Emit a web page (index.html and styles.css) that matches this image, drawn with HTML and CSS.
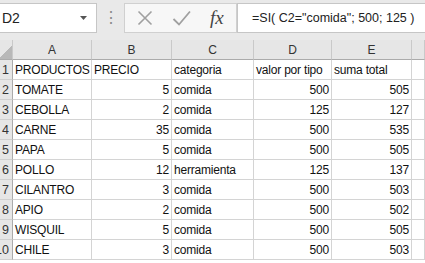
FILE: index.html
```html
<!DOCTYPE html>
<html>
<head>
    <title>Hoja1</title>
    <link rel="stylesheet" href="styles.css">
</head>
<body>
    <div class="formula-bar">
        <div class="name-box">
            <span>D2</span>
            <svg class="arrow" width="8" height="5" viewBox="0 0 8 5"><path d="M0 0h7L3.5 4z" fill="#555"/></svg>
        </div>
        <div class="grip">&#8942;</div>
        <div class="buttons">
            <svg width="16" height="16" viewBox="0 0 16 16"><path d="M1.5 1.5l13 13M14.5 1.5l-13 13" stroke="#a0a0a0" stroke-width="1.6" fill="none"/></svg>
            <svg width="19" height="16" viewBox="0 0 19 16"><path d="M1.5 9l5.5 5.5L18 1.5" stroke="#a0a0a0" stroke-width="1.8" fill="none"/></svg>
            <span class="fx">fx</span>
        </div>
        <div class="formula">=SI( C2="comida"; 500; 125 )</div>
    </div>

    <div class="sheet" id="sheet"></div>

    <script>
        const rows = [
            ['PRODUCTOS', 'PRECIO', 'categoria', 'valor por tipo', 'suma total'],
            ['TOMATE', 5, 'comida', 500, 505],
            ['CEBOLLA', 2, 'comida', 125, 127],
            ['CARNE', 35, 'comida', 500, 535],
            ['PAPA', 5, 'comida', 500, 505],
            ['POLLO', 12, 'herramienta', 125, 137],
            ['CILANTRO', 3, 'comida', 500, 503],
            ['APIO', 2, 'comida', 500, 502],
            ['WISQUIL', 5, 'comida', 500, 505],
            ['CHILE', 3, 'comida', 500, 503]
        ];
        const sheet = document.getElementById('sheet');

        function cell(text, cls) {
            const div = document.createElement('div');
            div.className = cls;
            div.textContent = text;
            sheet.appendChild(div);
        }

        // column headers
        cell('', 'head corner');
        ['A', 'B', 'C', 'D', 'E', ''].forEach(l => cell(l, 'head'));

        rows.forEach((r, i) => {
            cell(i + 1, 'rownum');
            r.forEach(v => cell(v, typeof v === 'number' ? 'cell num' : 'cell'));
            cell('', 'cell');
        });
    </script>
</body>
</html>
```

FILE: styles.css
```css
body {
    margin: 0;
    background: #fff;
    font-family: "Liberation Sans", Arial, sans-serif;
    overflow: hidden;
}
.formula-bar {
    height: 40px;
    background: #e9e9e9;
    display: flex;
    align-items: flex-start;
    box-sizing: border-box;
    padding-top: 3px;
}
.name-box {
    width: 97px;
    height: 30px;
    box-sizing: border-box;
    background: #fff;
    border: 1px solid #c6c6c6;
    border-left: none;
    display: flex;
    align-items: center;
    justify-content: space-between;
    padding: 0 8px 0 2px;
    font-size: 14px;
    color: #222;
}
.grip {
    width: 27px;
    text-align: center;
    color: #8a8a8a;
    font-size: 16px;
    line-height: 30px;
}
.buttons {
    width: 113px;
    height: 30px;
    box-sizing: border-box;
    background: #f7f7f7;
    border: 1px solid #d0d0d0;
    display: flex;
    align-items: center;
    gap: 19px;
    padding-left: 12px;
}
.fx {
    font-family: "Liberation Serif", serif;
    font-style: italic;
    font-size: 19px;
    color: #444;
}
.formula {
    flex: 1;
    height: 30px;
    box-sizing: border-box;
    background: #fff;
    border: 1px solid #c6c6c6;
    border-right: none;
    padding-left: 14px;
    font-size: 12.5px;
    line-height: 28px;
    white-space: nowrap;
    overflow: hidden;
    color: #222;
}
.sheet {
    display: grid;
    grid-template-columns: 13px 79px 80px 82px 78px 80px 1fr;
    grid-template-rows: 20px;
    grid-auto-rows: 20px;
}
.head {
    background: #e6e6e6;
    border-right: 1px solid #c9c9c9;
    border-bottom: 1px solid #ababab;
    text-align: center;
    font-size: 12px;
    line-height: 20px;
    color: #333;
}
.corner {
    background: linear-gradient(135deg, #e6e6e6 55%, #b8b8b8 55%);
}
.rownum {
    background: #e6e6e6;
    border-right: 1px solid #ababab;
    border-bottom: 1px solid #d0d0d0;
    font-size: 12.5px;
    line-height: 21px;
    color: #333;
    text-align: right;
    padding-right: 3px;
    white-space: nowrap;
    overflow: hidden;
    direction: rtl;
}
.cell {
    border-right: 1px solid #d4d4d4;
    border-bottom: 1px solid #d4d4d4;
    font-size: 12px;
    letter-spacing: -0.2px;
    line-height: 21px;
    padding: 0 2px 0 2px;
    white-space: nowrap;
    overflow: hidden;
    color: #111;
}
.num {
    text-align: right;
}
```
